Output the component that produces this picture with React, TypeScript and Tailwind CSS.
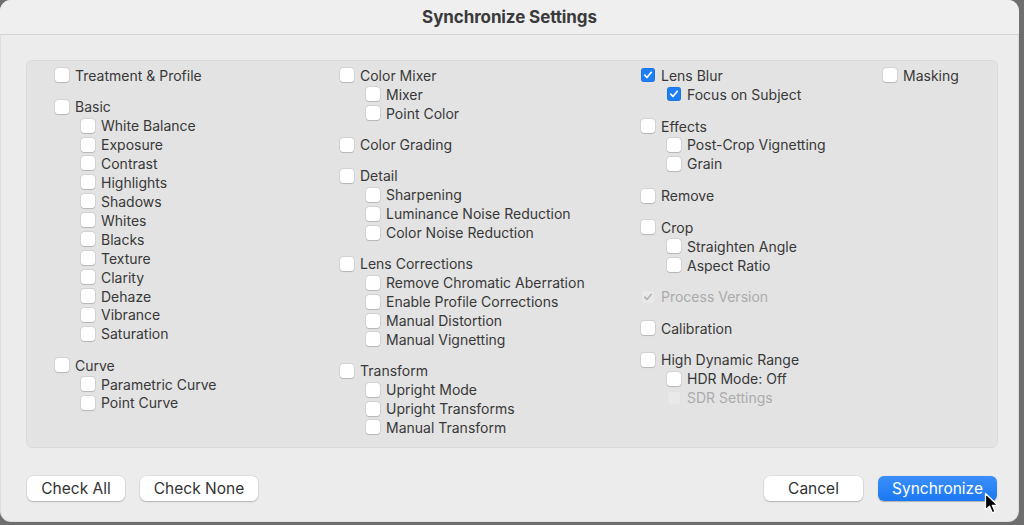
import React from 'react'

type Item = { label: string; checked?: boolean; disabled?: boolean; sub?: Item[] }

const columns: Item[][] = [
  [
    { label: 'Treatment & Profile' },
    {
      label: 'Basic',
      sub: [
        { label: 'White Balance' },
        { label: 'Exposure' },
        { label: 'Contrast' },
        { label: 'Highlights' },
        { label: 'Shadows' },
        { label: 'Whites' },
        { label: 'Blacks' },
        { label: 'Texture' },
        { label: 'Clarity' },
        { label: 'Dehaze' },
        { label: 'Vibrance' },
        { label: 'Saturation' },
      ],
    },
    { label: 'Curve', sub: [{ label: 'Parametric Curve' }, { label: 'Point Curve' }] },
  ],
  [
    { label: 'Color Mixer', sub: [{ label: 'Mixer' }, { label: 'Point Color' }] },
    { label: 'Color Grading' },
    {
      label: 'Detail',
      sub: [{ label: 'Sharpening' }, { label: 'Luminance Noise Reduction' }, { label: 'Color Noise Reduction' }],
    },
    {
      label: 'Lens Corrections',
      sub: [
        { label: 'Remove Chromatic Aberration' },
        { label: 'Enable Profile Corrections' },
        { label: 'Manual Distortion' },
        { label: 'Manual Vignetting' },
      ],
    },
    {
      label: 'Transform',
      sub: [{ label: 'Upright Mode' }, { label: 'Upright Transforms' }, { label: 'Manual Transform' }],
    },
  ],
  [
    { label: 'Lens Blur', checked: true, sub: [{ label: 'Focus on Subject', checked: true }] },
    { label: 'Effects', sub: [{ label: 'Post-Crop Vignetting' }, { label: 'Grain' }] },
    { label: 'Remove' },
    { label: 'Crop', sub: [{ label: 'Straighten Angle' }, { label: 'Aspect Ratio' }] },
    { label: 'Process Version', checked: true, disabled: true },
    { label: 'Calibration' },
    {
      label: 'High Dynamic Range',
      sub: [{ label: 'HDR Mode: Off' }, { label: 'SDR Settings', disabled: true }],
    },
  ],
  [{ label: 'Masking' }],
]

const Box = ({ checked, disabled }: { checked?: boolean; disabled?: boolean }) => {
  if (disabled) {
    return (
      <span className="w-[14px] h-[14px] rounded-[3px] bg-[#e9e9e9] border border-[#e2e2e2] flex items-center justify-center shrink-0">
        {checked && (
          <svg width="10" height="10" viewBox="0 0 10 10">
            <path d="M1.8 5.2 L4 7.5 L8.3 2.3" fill="none" stroke="#b4b4b4" strokeWidth="1.7" strokeLinecap="round" strokeLinejoin="round" />
          </svg>
        )}
      </span>
    )
  }
  if (checked) {
    return (
      <span className="w-[14px] h-[14px] rounded-[3px] bg-[#1d7ef6] flex items-center justify-center shrink-0 shadow-[inset_0_0_0_0.5px_rgba(0,0,0,0.15)]">
        <svg width="10" height="10" viewBox="0 0 10 10">
          <path d="M1.8 5.2 L4 7.5 L8.3 2.3" fill="none" stroke="#fff" strokeWidth="1.7" strokeLinecap="round" strokeLinejoin="round" />
        </svg>
      </span>
    )
  }
  return <span className="w-[14px] h-[14px] rounded-[3px] bg-white shrink-0 shadow-[0_0_0_0.5px_rgba(0,0,0,0.12),0_0.5px_1px_rgba(0,0,0,0.15)]" />
}

const Row = ({ item }: { item: Item }) => (
  <div className={`flex items-center gap-[6px] h-[18.94px] ${item.disabled ? 'text-[#ababab]' : 'text-[#383838]'}`}>
    <Box checked={item.checked} disabled={item.disabled} />
    <span className="whitespace-nowrap">{item.label}</span>
  </div>
)

const Group = ({ item }: { item: Item }) => (
  <div className="flex flex-col">
    <Row item={item} />
    {item.sub && (
      <div className="flex flex-col pl-[26px]">
        {item.sub.map((s) => (
          <Row key={s.label} item={s} />
        ))}
      </div>
    )}
  </div>
)

const Button = ({ children, primary, className }: { children: React.ReactNode; primary?: boolean; className?: string }) => (
  <button
    className={`h-[25px] rounded-[6px] text-[15.5px] flex items-center justify-center ${
      primary
        ? 'bg-gradient-to-b from-[#3a8ff8] to-[#1a78f3] text-white shadow-[0_0.5px_1px_rgba(0,0,0,0.25)]'
        : 'bg-white text-[#333] shadow-[0_0_0_0.5px_rgba(0,0,0,0.1),0_1px_1.5px_rgba(0,0,0,0.2)]'
    } ${className ?? ''}`}
  >
    {children}
  </button>
)

export default function App() {
  return (
    <div className="w-[1024px] h-[525px] bg-[#6e6e6e] overflow-hidden" style={{ fontFamily: 'Inter, "Liberation Sans", sans-serif' }}>
      <div className="relative w-[1019px] h-[522px] bg-[#ececec] rounded-[11px] flex flex-col overflow-hidden shadow-[inset_0_0_0_1px_rgba(0,0,0,0.06)]">
        <div className="h-[35px] pt-[2px] shrink-0 flex items-center justify-center border-b border-[#d4d4d4] bg-[#efefef]">
          <span className="text-[17px] font-bold text-[#3a3a3a] tracking-[-0.1px]">Synchronize Settings</span>
        </div>
        <div className="ml-[26px] w-[972px] mt-[25px] h-[388px] rounded-[6px] bg-[#e3e3e3] shadow-[inset_0_0_0_1px_rgba(0,0,0,0.03)] pl-[29px] pt-[6px] text-[14px] grid grid-cols-[285px_301px_242px_1fr]">
          {columns.map((col, i) => (
            <div key={i} className={`flex flex-col ${i === 2 ? 'gap-[12.7px]' : 'gap-[12.25px]'}`}>
              {col.map((item) => (
                <Group key={item.label} item={item} />
              ))}
            </div>
          ))}
        </div>
        <div className="flex items-center mt-[28px] pl-[27px] pr-[22px]">
          <Button className="w-[98px]">Check All</Button>
          <Button className="w-[118px] ml-[15px]">Check None</Button>
          <div className="flex-1" />
          <Button className="w-[99px]">Cancel</Button>
          <Button primary className="w-[119px] ml-[15px]">
            Synchronize
          </Button>
        </div>
        <svg className="absolute left-[984px] top-[492px]" width="16" height="24" viewBox="0 0 16 24">
          <path d="M1.5 1.5 L1.5 18 L5.5 14.3 L8.3 20.8 L11 19.6 L8.3 13.3 L13.6 13.3 Z" fill="#000" stroke="#fff" strokeWidth="1.3" strokeLinejoin="round" />
        </svg>
      </div>
    </div>
  )
}
